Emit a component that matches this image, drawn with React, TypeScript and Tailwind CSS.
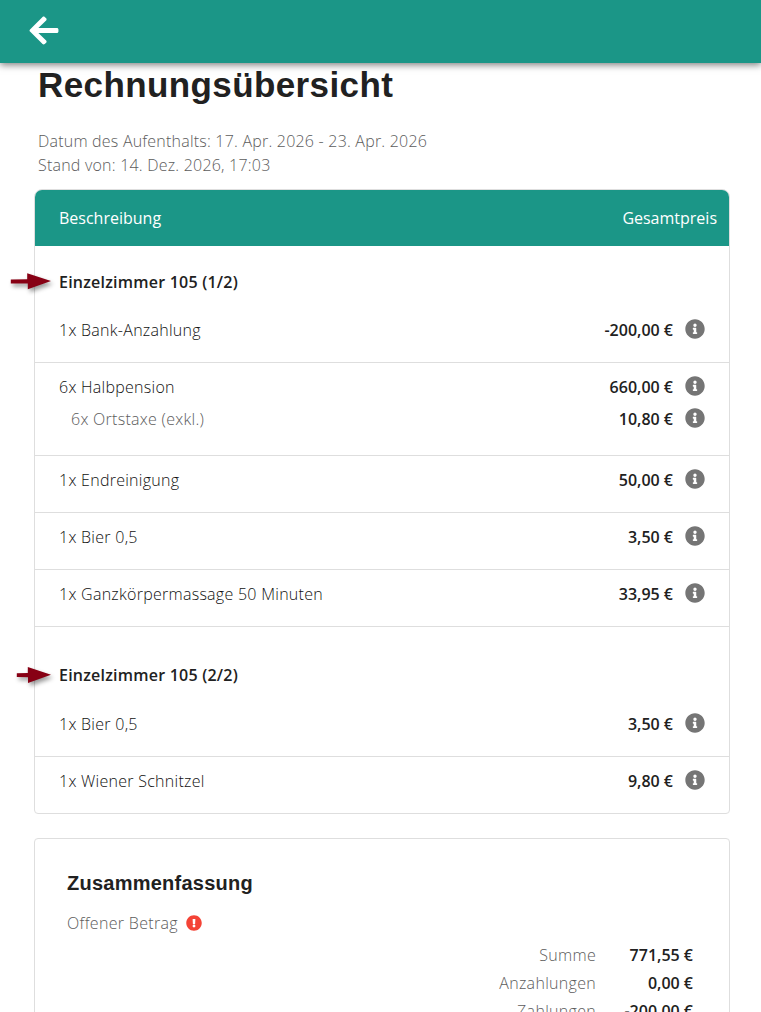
import React from 'react';
import { FaArrowLeft, FaExclamationCircle, FaInfoCircle } from 'react-icons/fa';
import clsx from 'clsx';

interface InvoiceLine {
  label: string;
  price: string;
  extra?: { label: string; price: string };
}

interface InvoiceGroup {
  title: string;
  lines: InvoiceLine[];
}

const groups: InvoiceGroup[] = [
  {
    title: 'Einzelzimmer 105 (1/2)',
    lines: [
      { label: '1x Bank-Anzahlung', price: '-200,00 €' },
      {
        label: '6x Halbpension',
        price: '660,00 €',
        extra: { label: '6x Ortstaxe (exkl.)', price: '10,80 €' },
      },
      { label: '1x Endreinigung', price: '50,00 €' },
      { label: '1x Bier 0,5', price: '3,50 €' },
      { label: '1x Ganzkörpermassage 50 Minuten', price: '33,95 €' },
    ],
  },
  {
    title: 'Einzelzimmer 105 (2/2)',
    lines: [
      { label: '1x Bier 0,5', price: '3,50 €' },
      { label: '1x Wiener Schnitzel', price: '9,80 €' },
    ],
  },
];

const totals = [
  { label: 'Summe', value: '771,55 €' },
  { label: 'Anzahlungen', value: '0,00 €' },
  { label: 'Zahlungen', value: '-200,00 €' },
];

const Price: React.FC<{ value: string }> = ({ value }) => (
  <div className="flex items-center gap-3">
    <span className="font-semibold">{value}</span>
    <FaInfoCircle className="w-5 h-5 -mt-0.5 text-[#757575]" />
  </div>
);

const Marker: React.FC<{ long?: boolean }> = ({ long }) => (
  <svg
    className="absolute -left-[50px] top-0.5 overflow-visible drop-shadow-[2px_3px_2px_rgba(0,0,0,0.4)]"
    width="44"
    height="20"
    viewBox="0 0 44 20"
    fill="#870014"
  >
    <path
      d={
        long
          ? 'M1.8 7.6L18.2 7.2V1.3L42 9L18.8 17.2V11.4L1.8 11.5Z'
          : 'M7.8 8.2L18.8 8V2.1L42 9.8L19 18V12.3L7.8 12.1Z'
      }
    />
  </svg>
);

const Row: React.FC<{ line: InvoiceLine; last: boolean }> = ({ line, last }) => (
  <div
    className={clsx(
      'px-6 pt-3 border-[#dedede]',
      line.extra ? 'pb-6' : 'pb-5',
      !last && 'border-b'
    )}
  >
    <div className="flex justify-between">
      <span className="tracking-[0.27px] text-[#111111]">{line.label}</span>
      <Price value={line.price} />
    </div>
    {line.extra && (
      <div className="flex justify-between mt-2 pl-3">
        <span className="tracking-[0.28px] text-[#5c5c5c]">{line.extra.label}</span>
        <Price value={line.extra.price} />
      </div>
    )}
  </div>
);

export default function App() {
  return (
    <div className="h-[1012px] overflow-hidden bg-white text-[#212121] text-base leading-6 font-light font-['Open_Sans',sans-serif]">
      <header className="relative h-[63px] bg-[#1b9687] pl-[29px] pb-0.5 flex items-center shadow-[0_2px_7px_rgba(0,0,0,0.5)]">
        <button type="button" aria-label="Zurück" className="text-white">
          <FaArrowLeft className="w-[30px] h-[33px]" />
        </button>
      </header>

      <main className="px-[34px]">
        <h1 className="pl-1 h-[66px] text-[35px] leading-[43px] font-bold tracking-[0.4px] font-['Liberation_Sans',Arial,sans-serif]">
          Rechnungsübersicht
        </h1>
        <div className="pl-1 tracking-[0.21px] text-[#5c5c5c]">
          <p>Datum des Aufenthalts: 17. Apr. 2026 - 23. Apr. 2026</p>
          <p>Stand von: 14. Dez. 2026, 17:03</p>
        </div>

        <section className="mt-3 w-[696px] border border-[#dedede] rounded-t-lg rounded-b">
          <div className="flex justify-between items-center h-14 pl-6 pr-3 rounded-t-[7px] bg-[#1b9687] text-white font-normal">
            <span>Beschreibung</span>
            <span>Gesamtpreis</span>
          </div>
          {groups.map((group, i) => (
            <div key={group.title}>
              <div className={clsx('px-6', i === 0 ? 'pt-6 pb-3' : 'pt-9 pb-[13px]')}>
                <h2 className="relative font-semibold tracking-[0.22px]">
                  <Marker long={i === 0} />
                  {group.title}
                </h2>
              </div>
              {group.lines.map((line, j) => (
                <Row
                  key={line.label}
                  line={line}
                  last={i === groups.length - 1 && j === group.lines.length - 1}
                />
              ))}
            </div>
          ))}
        </section>

        <section className="mt-6 w-[696px] px-8 pt-8 pb-8 border border-[#dedede] rounded">
          <h2 className="text-xl leading-6 font-bold tracking-[0.25px] font-['Liberation_Sans',Arial,sans-serif]">
            Zusammenfassung
          </h2>
          <div className="mt-4 flex items-center gap-2 text-[#5c5c5c]">
            <span className="tracking-[0.32px]">Offener Betrag</span>
            <FaExclamationCircle className="w-4 h-4 text-[#f44336]" />
          </div>
          <dl className="mt-2 pr-1 space-y-1">
            {totals.map((item) => (
              <div key={item.label} className="flex justify-end">
                <dt className="tracking-[0.3px] text-[#5c5c5c]">{item.label}</dt>
                <dd className="w-[97px] text-right font-semibold">{item.value}</dd>
              </div>
            ))}
          </dl>
        </section>
      </main>
    </div>
  );
}
